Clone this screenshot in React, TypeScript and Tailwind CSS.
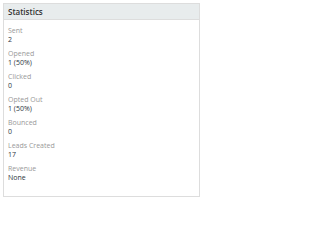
import React from "react";

const rows: { label: string; value: string }[] = [
  { label: "Sent", value: "2" },
  { label: "Opened", value: "1 (50%)" },
  { label: "Clicked", value: "0" },
  { label: "Opted Out", value: "1 (50%)" },
  { label: "Bounced", value: "0" },
  { label: "Leads Created", value: "17" },
  { label: "Revenue", value: "None" },
];

export default function App() {
  return (
    <div className="w-[204px] h-[201px] bg-white p-[3px] pr-[4px] pb-[4px]" style={{ fontFamily: '"Open Sans", sans-serif' }}>
      <div className="h-full border border-[#dddddd] flex flex-col">
        <div className="h-[16px] bg-[#e8eced] border-b border-[#dddddd] flex items-center px-[4px] text-[8px] font-semibold text-[#333333] leading-none">
          Statistics
        </div>
        <div className="flex flex-col gap-[5px] px-[4px] pt-[6px]">
          {rows.map((r) => (
            <div key={r.label} className="flex flex-col leading-[9px]">
              <div className="text-[7px] text-[#999999]">{r.label}</div>
              <div className="text-[7px] text-[#2d3540]">{r.value}</div>
            </div>
          ))}
        </div>
      </div>
    </div>
  );
}
